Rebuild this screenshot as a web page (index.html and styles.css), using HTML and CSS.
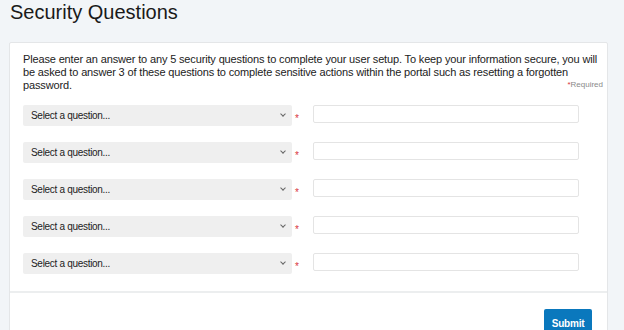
FILE: index.html
```html
<html>
<head>
    <title>Security Questions</title>
    <link rel="stylesheet" href="styles.css">
</head>
<body>
    <h1 class="page-title">Security Questions</h1>

    <div class="card">
        <div class="card-body">
            <p class="intro">Please enter an answer to any 5 security questions to complete your user setup. To keep your information secure, you will be asked to answer 3 of these questions to complete sensitive actions within the portal such as resetting a forgotten password.</p>
            <div class="required-note"><span class="star">*</span>Required</div>

            <div class="question-row">
                <div class="select">Select a question...<span class="chevron"></span></div>
                <span class="star req">*</span>
                <input class="answer" type="text">
            </div>
            <div class="question-row">
                <div class="select">Select a question...<span class="chevron"></span></div>
                <span class="star req">*</span>
                <input class="answer" type="text">
            </div>
            <div class="question-row">
                <div class="select">Select a question...<span class="chevron"></span></div>
                <span class="star req">*</span>
                <input class="answer" type="text">
            </div>
            <div class="question-row">
                <div class="select">Select a question...<span class="chevron"></span></div>
                <span class="star req">*</span>
                <input class="answer" type="text">
            </div>
            <div class="question-row">
                <div class="select">Select a question...<span class="chevron"></span></div>
                <span class="star req">*</span>
                <input class="answer" type="text">
            </div>
        </div>
        <div class="card-footer">
            <button class="submit-btn">Submit</button>
        </div>
    </div>
</body>
</html>
```

FILE: styles.css
```css
body {
    background: #f2f5f8;
    color: #222222;
    font-family: 'Liberation Sans', Arial, sans-serif;
    margin: 0px;
    padding: 0px 16px 0px 9px;
}

.page-title {
    font-weight: normal;
    font-size: 20px;
    margin: 0px;
    padding: 0px 0px 0px 1px;
    line-height: 25px;
    color: #1a1a1a;
}

.card {
    margin-top: 17px;
    background: #ffffff;
    border: 1px solid #e4e6e8;
    border-radius: 2px;
}

.card-body {
    padding: 10px 4px 17px 13px;
    border-bottom: 2px solid #eceeef;
}

.intro {
    margin: 0px;
    font-size: 11px;
    letter-spacing: -0.15px;
    line-height: 13px;
    color: #222222;
}

.required-note {
    text-align: right;
    font-size: 8px;
    color: #8a8a8a;
    margin-top: -12px;
    line-height: 10px;
    margin-bottom: 15px;
}

.star {
    color: #d9363e;
}

.question-row {
    display: flex;
    align-items: flex-start;
    margin-bottom: 16px;
}

.question-row:last-child {
    margin-bottom: 0px;
}

.select {
    width: 261px;
    height: 21px;
    background: #efefef;
    border-radius: 2px;
    font-size: 10px;
    letter-spacing: -0.3px;
    line-height: 21px;
    padding-left: 8px;
    color: #222222;
    position: relative;
}

.chevron {
    position: absolute;
    right: 7px;
    top: 7px;
    width: 3px;
    height: 3px;
    border-right: 1px solid #666666;
    border-bottom: 1px solid #666666;
    transform: rotate(45deg);
}

.req {
    font-size: 10px;
    width: 18px;
    padding-left: 3px;
    margin-top: 9px;
    line-height: 10px;
}

.answer {
    width: 266px;
    height: 18px;
    border: 1px solid #e4e4e4;
    border-radius: 2px;
    padding: 0px;
    margin: 0px;
    background: #ffffff;
}

.card-footer {
    padding: 16px 15px 20px 0px;
    text-align: right;
}

.submit-btn {
    background: #0a78bd;
    color: #ffffff;
    border: none;
    border-radius: 2px;
    font-family: 'Liberation Sans', Arial, sans-serif;
    font-weight: bold;
    font-size: 10px;
    letter-spacing: -0.2px;
    width: 48px;
    height: 28px;
    padding: 0px;
}
```
